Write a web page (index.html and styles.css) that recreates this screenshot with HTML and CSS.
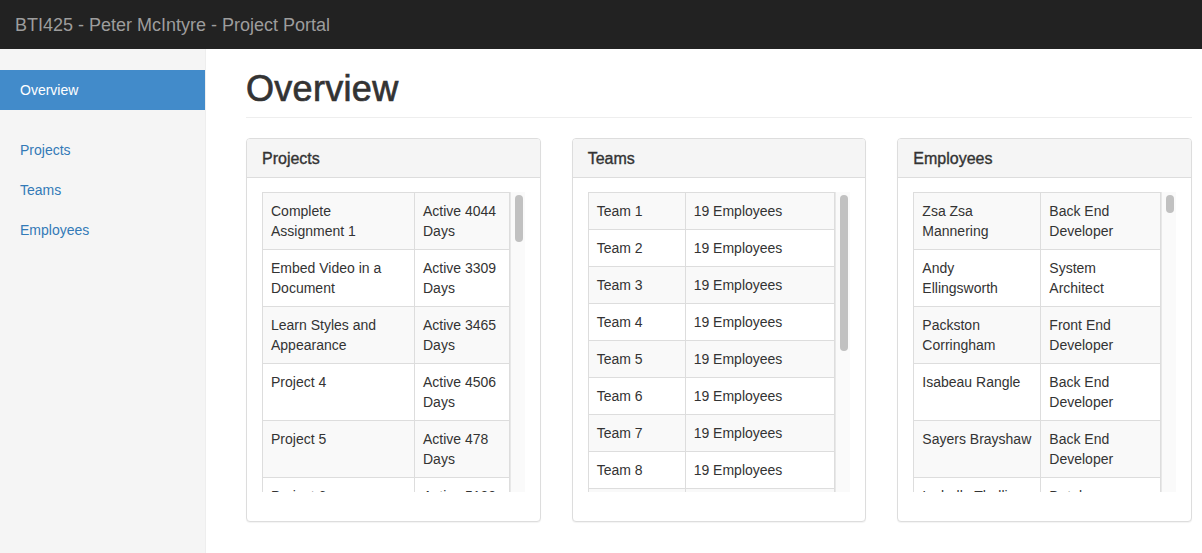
FILE: index.html
```html
<!DOCTYPE html>
<html lang="en">
<head>
<meta charset="utf-8">
<title>BTI425 - Project Portal</title>
<link rel="stylesheet" href="styles.css">
</head>
<body>
<header class="navbar">
  <span class="brand">BTI425 - Peter McIntyre - Project Portal</span>
</header>
<div class="layout">
  <nav class="sidebar">
    <ul class="nav-sidebar">
      <li class="active"><a href="#">Overview</a></li>
    </ul>
    <ul class="nav-sidebar">
      <li><a href="#">Projects</a></li>
      <li><a href="#">Teams</a></li>
      <li><a href="#">Employees</a></li>
    </ul>
  </nav>
  <main class="main">
    <h1 class="page-header">Overview</h1>
    <div class="panels">
      <section class="panel">
        <div class="panel-heading"><h3 class="panel-title">Projects</h3></div>
        <div class="panel-body">
          <div class="scroll-box">
            <div class="viewport">
              <table class="table">
                <colgroup><col class="c-projects"><col></colgroup>
                <tbody>
                  <tr><td>Complete Assignment 1</td><td>Active 4044 Days</td></tr>
                  <tr><td>Embed Video in a Document</td><td>Active 3309 Days</td></tr>
                  <tr><td>Learn Styles and Appearance</td><td>Active 3465 Days</td></tr>
                  <tr><td>Project 4</td><td>Active 4506 Days</td></tr>
                  <tr><td>Project 5</td><td>Active 478 Days</td></tr>
                  <tr><td>Project 6</td><td>Active 5133 Days</td></tr>
                  <tr><td>Project 7</td><td>Active 2210 Days</td></tr>
                  <tr><td>Project 8</td><td>Active 1873 Days</td></tr>
                </tbody>
              </table>
            </div>
            <div class="track"><div class="thumb thumb-projects"></div></div>
          </div>
        </div>
      </section>
      <section class="panel">
        <div class="panel-heading"><h3 class="panel-title">Teams</h3></div>
        <div class="panel-body">
          <div class="scroll-box">
            <div class="viewport">
              <table class="table">
                <colgroup><col class="c-teams"><col></colgroup>
                <tbody>
                  <tr><td>Team 1</td><td>19 Employees</td></tr>
                  <tr><td>Team 2</td><td>19 Employees</td></tr>
                  <tr><td>Team 3</td><td>19 Employees</td></tr>
                  <tr><td>Team 4</td><td>19 Employees</td></tr>
                  <tr><td>Team 5</td><td>19 Employees</td></tr>
                  <tr><td>Team 6</td><td>19 Employees</td></tr>
                  <tr><td>Team 7</td><td>19 Employees</td></tr>
                  <tr><td>Team 8</td><td>19 Employees</td></tr>
                  <tr><td>Team 9</td><td>19 Employees</td></tr>
                  <tr><td>Team 10</td><td>19 Employees</td></tr>
                </tbody>
              </table>
            </div>
            <div class="track"><div class="thumb thumb-teams"></div></div>
          </div>
        </div>
      </section>
      <section class="panel">
        <div class="panel-heading"><h3 class="panel-title">Employees</h3></div>
        <div class="panel-body">
          <div class="scroll-box">
            <div class="viewport">
              <table class="table">
                <colgroup><col class="c-employees"><col></colgroup>
                <tbody>
                  <tr><td>Zsa Zsa Mannering</td><td>Back End Developer</td></tr>
                  <tr><td>Andy Ellingsworth</td><td>System Architect</td></tr>
                  <tr><td>Packston Corringham</td><td>Front End Developer</td></tr>
                  <tr><td>Isabeau Rangle</td><td>Back End Developer</td></tr>
                  <tr><td>Sayers Brayshaw</td><td>Back End Developer</td></tr>
                  <tr><td>Isabella Thellier</td><td>Database Administrator</td></tr>
                  <tr><td>Marlon Pickett</td><td>Front End Developer</td></tr>
                  <tr><td>Dorian Hallett</td><td>System Architect</td></tr>
                </tbody>
              </table>
            </div>
            <div class="track"><div class="thumb thumb-employees"></div></div>
          </div>
        </div>
      </section>
    </div>
  </main>
</div>
</body>
</html>
```
FILE: styles.css
```css
* { box-sizing: border-box; }

html, body {
  margin: 0;
  padding: 0;
}

body {
  font-family: "Liberation Sans", Arial, Helvetica, sans-serif;
  font-size: 14px;
  line-height: 20px;
  color: #333;
  background: #fff;
}

.navbar {
  height: 49px;
  background: #222;
  display: flex;
  align-items: center;
  padding: 0 15px;
}

.brand {
  font-size: 18px;
  line-height: 20px;
  color: #9d9d9d;
}

.layout {
  display: flex;
  min-height: calc(100vh - 49px);
}

.sidebar {
  width: 206px;
  flex: none;
  background: #f5f5f5;
  border-right: 1px solid #eee;
  padding-top: 21px;
}

.nav-sidebar {
  list-style: none;
  margin: 0 0 20px;
  padding: 0;
}

.nav-sidebar a {
  display: block;
  padding: 10px 20px;
  color: #337ab7;
  text-decoration: none;
}

.nav-sidebar .active a {
  background: #428bca;
  color: #fff;
}

.main {
  flex: 1;
  min-width: 0;
  padding: 20px 10px 0 40px;
}

.page-header {
  margin: 0 0 20px;
  padding-bottom: 9px;
  border-bottom: 1px solid #eee;
  font-size: 36px;
  line-height: 39px;
  font-weight: 500;
  color: #333;
  letter-spacing: 0.3px;
  -webkit-text-stroke: 0.7px #333;
}

.panels {
  display: grid;
  grid-template-columns: repeat(3, 1fr);
  column-gap: 31px;
}

.panel {
  border: 1px solid #ddd;
  border-radius: 4px;
  box-shadow: 0 1px 1px rgba(0, 0, 0, 0.05);
  background: #fff;
}

.panel-heading {
  background: #f5f5f5;
  border-bottom: 1px solid #ddd;
  border-radius: 3px 3px 0 0;
  padding: 11px 15px 9px;
}

.panel-title {
  margin: 0;
  font-size: 16px;
  line-height: 17.6px;
  font-weight: 500;
  color: #333;
  -webkit-text-stroke: 0.35px #333;
}

.panel-body {
  padding: 14px 15px 29px;
}

.scroll-box {
  display: flex;
  height: 300px;
  overflow: hidden;
}

.viewport {
  flex: 1;
  min-width: 0;
  overflow: hidden;
}

.table {
  width: 100%;
  border-collapse: collapse;
  table-layout: fixed;
}

.table td {
  border: 1px solid #ddd;
  padding: 8px;
  vertical-align: top;
  line-height: 20px;
}

.table tr:nth-child(odd) td {
  background: #f9f9f9;
}

.c-projects { width: 152px; }
.c-teams { width: 97px; }
.c-employees { width: 127px; }

.track {
  width: 15px;
  flex: none;
  background: #fafafa;
  border-left: 1px solid #e8e8e8;
  padding: 3px 2px 0 4px;
}

.thumb {
  width: 8px;
  border-radius: 4px;
  background: #c1c1c1;
}

.thumb-projects { height: 47px; }
.thumb-teams { height: 156px; }
.thumb-employees { height: 18px; }
```
